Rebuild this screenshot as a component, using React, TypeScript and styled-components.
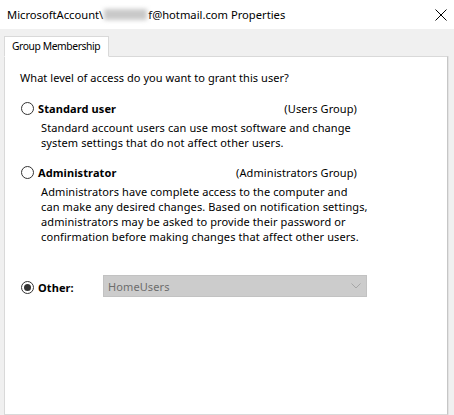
import styled, { createGlobalStyle } from "styled-components";

const GlobalStyle = createGlobalStyle`
  html, body {
    margin: 0;
    padding: 0;
    background: #f0f0f0;
  }
  body {
    font-family: "Noto Sans", "Open Sans", sans-serif;
    font-size: 11px;
    color: #000;
  }
`;

const Window = styled.div`
  width: 454px;
  height: 415px;
  display: flex;
  flex-direction: column;
  background: #f0f0f0;
  overflow: hidden;
`;

const TitleBar = styled.div`
  height: 29px;
  flex-shrink: 0;
  display: flex;
  align-items: center;
  justify-content: space-between;
  background: #fff;
  padding: 0 7px 0 7px;
  box-sizing: border-box;
`;

const Title = styled.div`
  font-size: 11.2px;
  line-height: 15px;
  white-space: nowrap;
  display: flex;
  align-items: center;
`;

const Redacted = styled.span`
  display: inline-block;
  width: 43px;
  height: 11px;
  margin: 0 1px;
  background: #c9c9c9;
  filter: blur(2px);
`;

const CloseButton = styled.button`
  width: 12px;
  height: 12px;
  padding: 0;
  border: 0;
  background: transparent;
  display: flex;
`;

const Body = styled.div`
  flex: 1;
  display: flex;
  flex-direction: column;
  padding: 7px 6px 0 4px;
`;

const TabStrip = styled.div`
  display: flex;
  position: relative;
  z-index: 1;
  margin-bottom: -1px;
`;

const Tab = styled.div`
  height: 21px;
  box-sizing: border-box;
  padding: 2px 8px 0 7px;
  background: #fff;
  border: 1px solid #d9d9d9;
  border-bottom: 1px solid #fff;
  line-height: 15px;
  font-size: 10.3px;
  letter-spacing: -0.4px;
`;

const Panel = styled.div`
  flex: 1;
  background: #fff;
  border: 1px solid #d9d9d9;
  border-right-color: #c6c6c6;
  box-shadow: 1px 0 0 #e3e3e3;
  padding: 13px 0 0 15px;
  display: flex;
  flex-direction: column;
  line-height: 15px;
  letter-spacing: 0.1px;
`;

const Question = styled.div`
  margin-bottom: 16px;
  letter-spacing: 0.05px;
`;

const Option = styled.div`
  display: flex;
  flex-direction: column;
  margin-bottom: 15px;
`;

const OptionRow = styled.label`
  display: flex;
  align-items: center;
  width: 337px;
  height: 15px;
`;

const Radio = styled.span<{ $checked?: boolean }>`
  width: 13px;
  height: 13px;
  box-sizing: border-box;
  border: 1px solid #333;
  border-radius: 50%;
  flex-shrink: 0;
  margin-right: 4px;
  margin-left: 1px;
  display: flex;
  align-items: center;
  justify-content: center;
  &::after {
    content: "";
    display: ${(p) => (p.$checked ? "block" : "none")};
    width: 7px;
    height: 7px;
    border-radius: 50%;
    background: #333;
  }
`;

const OptionName = styled.span`
  font-weight: 700;
  flex: 1;
`;

const GroupName = styled.span`
  white-space: nowrap;
`;

const Description = styled.div`
  margin-top: 4px;
  padding-left: 21px;
`;

const OtherRow = styled.div`
  display: flex;
  align-items: center;
  margin-top: 16px;
`;

const OtherLabel = styled.label`
  display: flex;
  align-items: center;
  width: 83px;
  font-weight: 700;
  padding-top: 2px;
`;

const Select = styled.div`
  width: 264px;
  height: 22px;
  box-sizing: border-box;
  background: #cccccc;
  border: 1px solid #c2c2c2;
  color: #6d6d6d;
  display: flex;
  align-items: center;
  justify-content: space-between;
  padding: 0 5px 0 4px;
`;

const options = [
  {
    name: "Standard user",
    group: "(Users Group)",
    lines: [
      "Standard account users can use most software and change",
      "system settings that do not affect other users.",
    ],
  },
  {
    name: "Administrator",
    group: "(Administrators Group)",
    lines: [
      "Administrators have complete access to the computer and",
      "can make any desired changes. Based on notification settings,",
      "administrators may be asked to provide their password or",
      "confirmation before making changes that affect other users.",
    ],
  },
];

export default function App() {
  return (
    <>
      <GlobalStyle />
      <Window>
        <TitleBar>
          <Title>
            MicrosoftAccount\<Redacted />f@hotmail.com Properties
          </Title>
          <CloseButton aria-label="Close">
            <svg width="12" height="12" viewBox="0 0 12 12">
              <path d="M0.5 0.5 L11.5 11.5 M11.5 0.5 L0.5 11.5" stroke="#000" strokeWidth="1" fill="none" />
            </svg>
          </CloseButton>
        </TitleBar>
        <Body>
          <TabStrip>
            <Tab>Group Membership</Tab>
          </TabStrip>
          <Panel>
            <Question>What level of access do you want to grant this user?</Question>
            {options.map((o) => (
              <Option key={o.name}>
                <OptionRow>
                  <Radio />
                  <OptionName>{o.name}</OptionName>
                  <GroupName>{o.group}</GroupName>
                </OptionRow>
                <Description>
                  {o.lines.map((l) => (
                    <div key={l}>{l}</div>
                  ))}
                </Description>
              </Option>
            ))}
            <OtherRow>
              <OtherLabel>
                <Radio $checked />
                Other:
              </OtherLabel>
              <Select>
                <span>HomeUsers</span>
                <svg width="10" height="6" viewBox="0 0 10 6">
                  <path d="M0.5 0.5 L5 5 L9.5 0.5" stroke="#a6a6a6" strokeWidth="1" fill="none" />
                </svg>
              </Select>
            </OtherRow>
          </Panel>
        </Body>
      </Window>
    </>
  );
}
